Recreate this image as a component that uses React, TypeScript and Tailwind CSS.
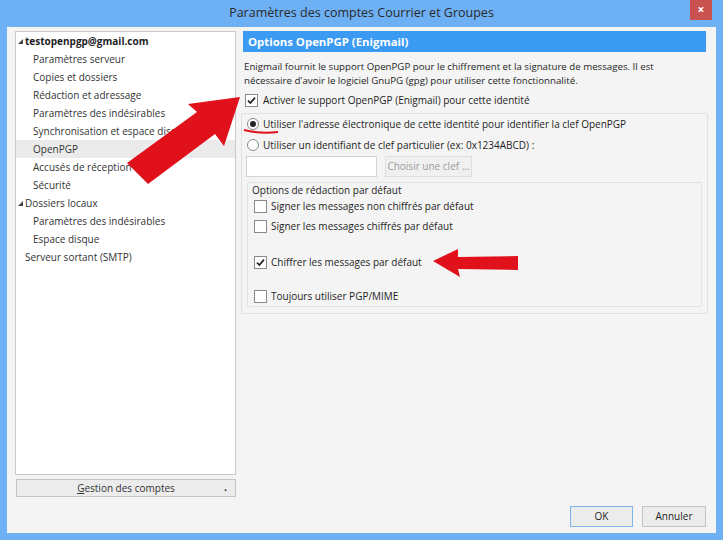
import React from 'react';

const treeItems: { label: string; level: 0 | 1; bold?: boolean; toggle?: boolean; selected?: boolean }[] = [
  { label: 'testopenpgp@gmail.com', level: 0, bold: true, toggle: true },
  { label: 'Paramètres serveur', level: 1 },
  { label: 'Copies et dossiers', level: 1 },
  { label: 'Rédaction et adressage', level: 1 },
  { label: 'Paramètres des indésirables', level: 1 },
  { label: 'Synchronisation et espace disque', level: 1 },
  { label: 'OpenPGP', level: 1, selected: true },
  { label: 'Accusés de réception', level: 1 },
  { label: 'Sécurité', level: 1 },
  { label: 'Dossiers locaux', level: 0, toggle: true },
  { label: 'Paramètres des indésirables', level: 1 },
  { label: 'Espace disque', level: 1 },
  { label: 'Serveur sortant (SMTP)', level: 0 },
];

function Check({ checked }: { checked?: boolean }) {
  return (
    <span className="w-[13px] h-[13px] border border-[#8a8a8a] bg-white flex items-center justify-center shrink-0">
      {checked && (
        <svg width="9" height="9" viewBox="0 0 9 9">
          <path d="M1 4.6 L3.4 7 L8 1.6" fill="none" stroke="#222" strokeWidth="1.7" />
        </svg>
      )}
    </span>
  );
}

function Radio({ checked }: { checked?: boolean }) {
  return (
    <span className="w-[12px] h-[12px] rounded-full border border-[#8a8a8a] bg-white flex items-center justify-center shrink-0">
      {checked && <span className="w-[6px] h-[6px] rounded-full bg-[#222]" />}
    </span>
  );
}

export default function App() {
  return (
    <div
      className="w-[723px] h-[540px] bg-[#6db0f4] flex flex-col relative overflow-hidden text-[10px] text-[#1e1e1e]"
      style={{ fontFamily: '"Open Sans", "Noto Sans", sans-serif' }}
    >
      {/* title bar */}
      <div className="h-[27px] flex items-center justify-center relative shrink-0">
        <span className="text-[12.5px] text-[#2a2a2a]">Paramètres des comptes Courrier et Groupes</span>
        <div className="absolute right-[11px] top-0 w-[22px] h-[20px] bg-[#c9514f] flex items-center justify-center text-white text-[12px] font-bold">
          ×
        </div>
      </div>

      {/* content */}
      <div className="flex-1 mx-[7px] mb-[7px] bg-[#f4f4f4] flex flex-col pl-[8px] pt-[4px]">
        <div className="flex h-[466px]">
          {/* left column */}
          <div className="w-[221px] flex flex-col gap-[4px]">
            <div className="h-[444px] bg-white border border-[#c9c9c9]">
              {treeItems.map((it, i) => (
                <div
                  key={i}
                  className={
                    'h-[18px] flex items-center whitespace-nowrap overflow-hidden ' +
                    (it.selected ? 'bg-[#ebebeb] ' : '') +
                    (it.level === 1 ? 'pl-[10px]' : 'pl-[2px]')
                  }
                >
                  <span className="w-[7px] flex items-center shrink-0">
                    {it.toggle && (
                      <svg width="5" height="5" viewBox="0 0 5 5">
                        <path d="M5 0 L5 5 L0 5 Z" fill="#444" />
                      </svg>
                    )}
                  </span>
                  <span className={it.bold ? 'font-bold' : 'text-[#333]'}>{it.label}</span>
                </div>
              ))}
            </div>
            <div className="h-[18px] ml-[1px] border border-[#c4c4c4] bg-[#ececec] flex items-center justify-center relative text-[#333]">
              <span>
                <span className="underline">G</span>estion des comptes
              </span>
              <span className="absolute right-[8px] top-[4px] text-[8px]">•</span>
            </div>
          </div>

          {/* right column */}
          <div className="ml-[5px] w-[467px] flex flex-col">
            <div className="h-[21px] mx-[2px] bg-[#3b9af2] flex items-center px-[5px] text-white font-bold text-[11.4px]">
              Options OpenPGP (Enigmail)
            </div>
            <p className="pl-[3px] mt-[8px] leading-[14px] text-[9.7px]">
              Enigmail fournit le support OpenPGP pour le chiffrement et la signature de messages. Il est
              <br />
              nécessaire d'avoir le logiciel GnuPG (gpg) pour utiliser cette fonctionnalité.
            </p>
            <div className="flex items-center gap-[5px] pl-[4px] mt-[6px] h-[13px]">
              <Check checked />
              <span>Activer le support OpenPGP (Enigmail) pour cette identité</span>
            </div>

            {/* outer box */}
            <div className="mt-[6px] h-[201px] border border-[#e0e0e0] rounded-[2px] flex flex-col">
              <div className="flex items-center gap-[4px] pl-[5px] mt-[3px] h-[14px]">
                <Radio checked />
                <span>Utiliser l'adresse électronique de cette identité pour identifier la clef OpenPGP</span>
              </div>
              <div className="flex items-center gap-[4px] pl-[5px] mt-[7px] h-[14px]">
                <Radio />
                <span>Utiliser un identifiant de clef particulier (ex: 0x1234ABCD) :</span>
              </div>
              <div className="flex items-center gap-[8px] pl-[4px] mt-[4px]">
                <div className="w-[131px] h-[21px] bg-white border border-[#d4d4d4]" />
                <div className="w-[87px] h-[21px] bg-[#f0f0f0] border border-[#dedede] flex items-center justify-center text-[#9a9a9a] whitespace-nowrap">
                  Choisir une clef ...
                </div>
              </div>

              {/* inner box */}
              <div className="mx-[5px] mt-[5px] h-[125px] border border-[#e2e2e2] rounded-[2px] flex flex-col pl-[6px]">
                <div className="h-[14px] flex items-center -ml-[2px]">Options de rédaction par défaut</div>
                <div className="flex items-center gap-[4px] mt-[2px] h-[14px]">
                  <Check />
                  <span>Signer les messages non chiffrés par défaut</span>
                </div>
                <div className="flex items-center gap-[4px] mt-[6px] h-[14px]">
                  <Check />
                  <span>Signer les messages chiffrés par défaut</span>
                </div>
                <div className="flex items-center gap-[4px] mt-[22px] h-[14px]">
                  <Check checked />
                  <span>Chiffrer les messages par défaut</span>
                </div>
                <div className="flex items-center gap-[4px] mt-[20px] h-[14px]">
                  <Check />
                  <span>Toujours utiliser PGP/MIME</span>
                </div>
              </div>
            </div>
          </div>
        </div>

        {/* dialog buttons */}
        <div className="flex justify-end gap-[9px] mt-[9px] pr-[10px]">
          <div className="w-[63px] h-[21px] border border-[#7eb4ea] bg-[#ececec] flex items-center justify-center">OK</div>
          <div className="w-[64px] h-[21px] border border-[#c4c4c4] bg-[#ececec] flex items-center justify-center">Annuler</div>
        </div>
      </div>

      {/* red annotations */}
      <svg className="absolute left-0 top-0 pointer-events-none" width="723" height="540">
        <polygon
          points="240,97 224,146 215,134 148,184 127,163 197,112 188,104"
          fill="#e0111b"
        />
        <polygon points="433,261 458,249 458,257 518,256 518,270 458,269 460,277" fill="#e0111b" />
        <path d="M244 130 Q260 134 278 132" fill="none" stroke="#e0111b" strokeWidth="2" />
      </svg>
    </div>
  );
}
